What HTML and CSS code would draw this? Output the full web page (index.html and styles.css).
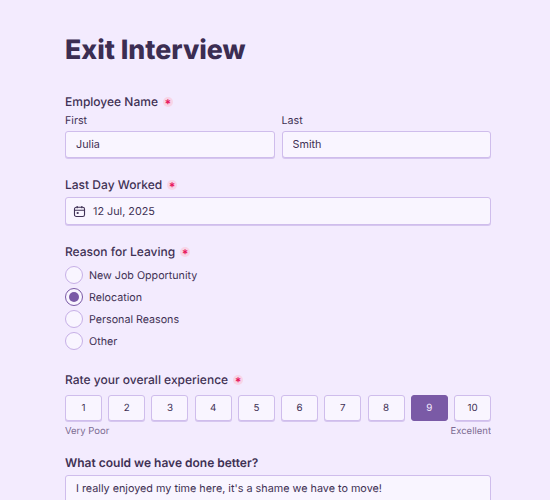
FILE: index.html
```html
<!DOCTYPE html>
<html lang="en">
<head>
<meta charset="utf-8">
<title>Exit Interview</title>
<link rel="stylesheet" href="styles.css">
</head>
<body>
<form class="form">
  <h1 class="title">Exit Interview</h1>

  <section class="field name-field">
    <div class="label">Employee Name <span class="req">*</span></div>
    <div class="name-grid">
      <label class="sub"><span class="sub-label">First</span><input class="input" value="Julia"></label>
      <label class="sub"><span class="sub-label">Last</span><input class="input" value="Smith"></label>
    </div>
  </section>

  <section class="field date-field">
    <div class="label label-gap">Last Day Worked <span class="req">*</span></div>
    <div class="input date">
      <svg class="cal" viewBox="0 0 14 14" fill="none" stroke="#3f3154" stroke-width="1.2"><rect x="1.6" y="2.4" width="10.8" height="10" rx="2"/><path d="M1.6 5.6h10.8M4.5 1v2.4M9.5 1v2.4"/><rect x="4" y="7.6" width="2" height="2" fill="#3f3154" stroke="none"/></svg>
      <span>12 Jul, 2025</span>
    </div>
  </section>

  <section class="field reason-field">
    <div class="label label-gap-s">Reason for Leaving <span class="req">*</span></div>
    <div class="radios">
      <div class="radio"><span class="dot"></span>New Job Opportunity</div>
      <div class="radio"><span class="dot on"></span>Relocation</div>
      <div class="radio"><span class="dot"></span>Personal Reasons</div>
      <div class="radio"><span class="dot"></span>Other</div>
    </div>
  </section>

  <section class="field rate-field">
    <div class="label label-gap-m">Rate your overall experience <span class="req">*</span></div>
    <div class="scale">
      <div class="num">1</div><div class="num">2</div><div class="num">3</div><div class="num">4</div><div class="num">5</div>
      <div class="num">6</div><div class="num">7</div><div class="num">8</div><div class="num sel">9</div><div class="num">10</div>
    </div>
    <div class="ends"><span>Very Poor</span><span>Excellent</span></div>
  </section>

  <section class="field better-field">
    <div class="label label-strong label-gap">What could we have done better?</div>
    <div class="input area">I really enjoyed my time here, it's a shame we have to move!</div>
  </section>
</form>
</body>
</html>
```
FILE: styles.css
```css
* { box-sizing: border-box; }
html, body { margin: 0; height: 500px; overflow: hidden; }
body {
  background: #f3ebfe;
  color: #3f3154;
  font-family: Inter, "Liberation Sans", sans-serif;
  font-size: 11px;
  text-rendering: geometricPrecision;
}
.form { width: 426px; margin-left: 65px; padding-top: 33px; height: 500px; overflow: hidden; }
.title { margin: 0; font-size: 26.7px; line-height: 34px; font-weight: 800; color: #3b2d52; }
.name-field { margin-top: 26px; }
.date-field { margin-top: 18px; }
.reason-field { margin-top: 18px; }
.rate-field { margin-top: 21px; }
.better-field { margin-top: 15px; }
.label { font-size: 12px; line-height: 18px; font-weight: 500; display: flex; align-items: center; gap: 5px; }
.label-gap { margin-bottom: 3px; }
.label-gap-m { margin-bottom: 6px; }
.label-gap-s { margin-bottom: 5px; }
.label-strong { font-weight: 600; }
.req {
  width: 10px; height: 10px; border-radius: 50%;
  background: #f7d5e7; color: #e8175d;
  font-size: 12px; line-height: 13px; text-align: center;
  display: block; font-weight: 700;
}
.name-grid { display: grid; grid-template-columns: 1fr 1fr; gap: 7px; margin-top: 3px; }
.sub { display: block; }
.sub-label { display: block; font-size: 10.7px; line-height: 14px; margin-bottom: 3px; }
.input {
  display: block; width: 100%; height: 27px;
  border: 1px solid #cfbdec; border-radius: 3px;
  background: #f9f5ff; color: #3f3154;
  box-shadow: 0 1px 0 #d6c6ef;
  padding: 0 10px; font: inherit; font-size: 10.8px; line-height: 25px;
  outline: none;
}
.date { display: flex; align-items: center; gap: 7px; padding: 0 7px; height: 28px; }
.cal { flex: none; width: 13px; height: 13px; }
.radios { display: flex; flex-direction: column; gap: 4px; }
.radio { display: flex; align-items: center; gap: 6px; height: 18px; font-size: 10.7px; }
.dot { width: 18px; height: 18px; border-radius: 50%; border: 1px solid #c6afe6; background: #f9f5ff; position: relative; }
.dot.on { border-color: #7a5aa6; }
.dot.on::after { content: ""; position: absolute; inset: 3px; border-radius: 50%; background: #7a5aa6; }
.scale { display: grid; grid-template-columns: repeat(10, 1fr); gap: 6.2px; }
.num {
  height: 26px; border: 1px solid #cfbdec; border-radius: 3px; background: #f9f5ff;
  box-shadow: 0 1px 0 #d6c6ef;
  display: flex; align-items: center; justify-content: center; font-size: 9.8px;
}
.num.sel { background: #7a5aa6; border-color: #7a5aa6; color: #f4ebff; box-shadow: none; }
.ends { display: flex; justify-content: space-between; margin-top: 4px; font-size: 9.5px; line-height: 14px; color: #7b6b92; }
.area { height: 60px; line-height: 25px; }
```
